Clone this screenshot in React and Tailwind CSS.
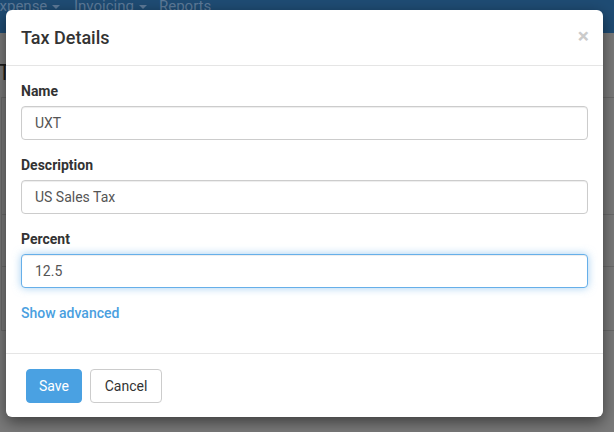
import React from "react";

const font = { fontFamily: "Roboto, 'Liberation Sans', sans-serif" };

function Field({ label, value, focused }) {
  return (
    <div className="mb-[15px]">
      <label className="block text-[14px] leading-[20px] font-bold text-[#333] mb-[5px]">{label}</label>
      <div
        className={
          "h-[34px] w-full rounded-[4px] border bg-white px-[13px] flex items-center text-[14px] text-[#555] " +
          (focused
            ? "border-[#66afe9] shadow-[inset_0_1px_1px_rgba(0,0,0,0.075),0_0_8px_rgba(102,175,233,0.6)]"
            : "border-[#ccc] shadow-[inset_0_1px_1px_rgba(0,0,0,0.075)]")
        }
      >
        {value}
      </div>
    </div>
  );
}

function Caret() {
  return <span className="inline-block ml-[5px] align-middle w-0 h-0 border-x-[4px] border-x-transparent border-t-[4px] border-t-[#5d7a98]"></span>;
}

export default function App() {
  return (
    <div className="relative w-[614px] h-[432px] overflow-hidden bg-[#7a7a7a]" style={font}>
      {/* page behind backdrop */}
      <div className="h-[33px] bg-[#1f4c74] flex items-start text-[15px] leading-[20px] text-[#5d7a98]">
        <div className="flex -mt-[4px] -ml-[9px]">
          <span className="w-[83px]">Expense<Caret /></span>
          <span className="w-[85px]">Invoicing<Caret /></span>
          <span>Reports</span>
        </div>
      </div>
      <div>
        <div className="text-[22px] leading-[26px] text-[#1c1c1c] mt-[27px] -ml-[2px] h-[37px]">Taxes</div>
        <div className="ml-[1px] border-l border-t border-[#6a6a6a]">
          <div className="h-[117px] border-b border-[#6a6a6a]"></div>
          <div className="h-[52px] border-b border-[#6a6a6a]"></div>
          <div className="h-[64px] border-b border-[#6a6a6a]"></div>
        </div>
      </div>

      {/* modal */}
      <div className="absolute left-[6px] top-[10px] w-[597px] bg-white rounded-[6px] shadow-[0_5px_15px_rgba(0,0,0,0.5)]">
        <div className="flex items-start justify-between px-[15px] pt-[15px] pb-[15px] border-b border-[#e5e5e5]">
          <h4 className="text-[18px] leading-[25px] font-medium text-[#333]">Tax Details</h4>
          <span className="text-[21px] leading-[21px] font-bold text-[#cbcbcb] mt-[1px] -mr-[1px]">×</span>
        </div>
        <div className="p-[15px]">
          <Field label="Name" value="UXT" />
          <Field label="Description" value="US Sales Tax" />
          <Field label="Percent" value="12.5" focused />
          <div className="text-[14px] leading-[20px] font-medium text-[#4a9fdf] mb-[15px]">Show advanced</div>
        </div>
        <div className="border-t border-[#e5e5e5] pt-[15px] pb-[14px] pl-[20px] flex gap-[8px]">
          <button className="h-[34px] w-[56px] rounded-[4px] bg-[#4aa1e2] border border-[#4aa1e2] text-white text-[14px]">Save</button>
          <button className="h-[34px] w-[72px] rounded-[4px] bg-white border border-[#ccc] text-[#333] text-[14px]">Cancel</button>
        </div>
      </div>
    </div>
  );
}
